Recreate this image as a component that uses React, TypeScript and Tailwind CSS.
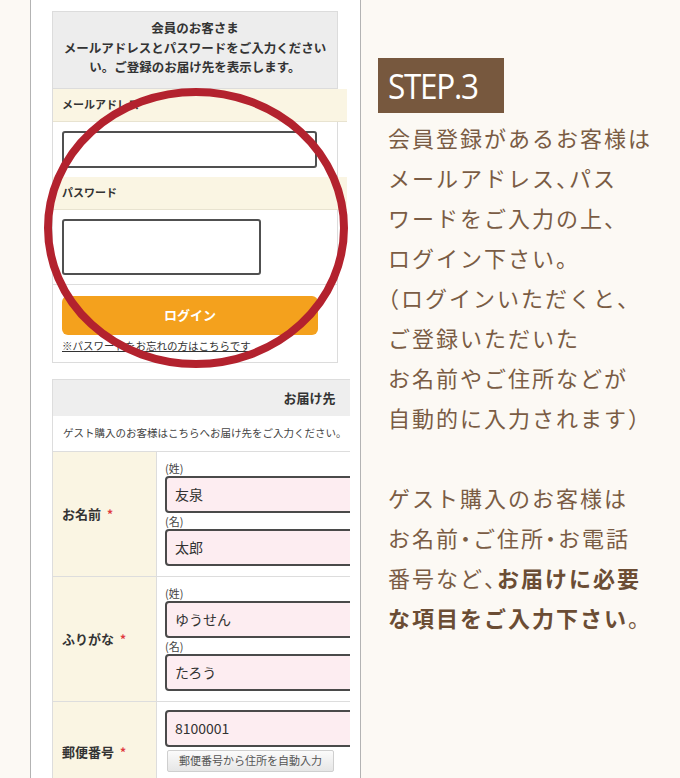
import React from 'react';

const jp = "font-['Noto_Sans_CJK_JP','Noto_Sans',sans-serif]";

const Half = ({ c }: { c: string }) => (
  <span className="[font-feature-settings:'halt']">{c}</span>
);

const Band = ({ label }: { label: string }) => (
  <div className="w-[294px] h-[33px] bg-[#faf5e3] border-b border-[#e8e3d0] flex items-center pl-[9px] text-[11px] font-semibold text-[#333]">
    {label}
  </div>
);

const Field = ({ value }: { value: string }) => (
  <div className="h-[37px] w-[300px] border-2 border-[#4a4a4a] rounded-[4px] bg-[#fdedf1] flex items-center pl-[8px] text-[14px] text-[#333]">
    {value}
  </div>
);

const Label = ({ text }: { text: string }) => (
  <div className="w-[104px] shrink-0 bg-[#faf5e3] border-r border-[#ddd] flex items-center pl-[9px] text-[13px] font-bold text-[#333]">
    {text}
    <span className="text-[#e0393e] ml-[6px] text-[12px]">*</span>
  </div>
);

const NameRow = ({ label, a, b }: { label: string; a: string; b: string }) => (
  <div className="flex border-b border-[#ddd]">
    <Label text={label} />
    <div className="pl-[8px] pt-[8px] pb-[10px]">
      <div className="text-[11px] leading-[16px] text-[#444]">(姓)</div>
      <Field value={a} />
      <div className="text-[11px] leading-[16px] text-[#444]">(名)</div>
      <Field value={b} />
    </div>
  </div>
);

export default function App() {
  return (
    <div className={`relative w-[680px] h-[778px] overflow-hidden bg-[#fcf9f4] flex ${jp}`}>
      <div className="w-[30px] shrink-0" />
      {/* screenshot panel */}
      <div className="w-[331px] h-full shrink-0 bg-white border-x border-[#b3b3b3] pl-[21px] pt-[11px]">
        <div className="w-[298px] overflow-hidden">
          {/* member login */}
          <div className="w-[286px] border border-[#dcdcdc]">
            <div className="bg-[#ededed] border-b border-[#dcdcdc] pt-[6px] pb-[11px] text-center text-[12.5px] leading-[19.5px] font-bold text-[#333]">
              会員のお客さま
              <br />
              メールアドレスとパスワードをご入力ください
              <br />
              い。ご登録のお届け先を表示します。
            </div>
            <Band label="メールアドレス" />
            <div className="px-[9px] py-[9px]">
              <div className="h-[37px] w-[255px] border-2 border-[#505050] rounded-[3px] bg-white" />
            </div>
            <Band label="パスワード" />
            <div className="px-[9px] pt-[9px] pb-[9px] border-b border-[#ddd]">
              <div className="h-[56px] w-[199px] border-2 border-[#505050] rounded-[3px] bg-white" />
            </div>
            <div className="px-[9px] pt-[11px] pb-[8px]">
              <div className="h-[39px] w-[256px] rounded-[6px] bg-[#f4a11d] flex items-center justify-center text-white text-[13px] font-bold">
                ログイン
              </div>
              <div className="mt-[3px] text-[10.5px] leading-[16px] text-[#333] underline">
                ※パスワードをお忘れの方はこちらです
              </div>
            </div>
          </div>

          {/* delivery */}
          <div className="mt-[16px] w-[514px] border-l border-t border-[#ddd]">
            <div className="h-[36px] bg-[#eeeeee] flex items-center justify-center text-[13px] font-bold text-[#333]">
              お届け先
            </div>
            <div className="h-[36px] border-b border-[#ddd] flex items-center pl-[10px] text-[10.5px] text-[#444]">
              ゲスト購入のお客様はこちらへお届け先をご入力ください。
            </div>
            <NameRow label="お名前" a="友泉" b="太郎" />
            <NameRow label="ふりがな" a="ゆうせん" b="たろう" />
            <div className="flex h-[100px]">
              <Label text="郵便番号" />
              <div className="pl-[8px] pt-[8px]">
                <Field value="8100001" />
                <div className="mt-[3px] ml-[2px] h-[22px] w-[167px] border border-[#cfcfcf] rounded-[2px] bg-gradient-to-b from-[#fbfbfb] to-[#e6e6e6] flex items-center justify-center text-[11px] text-[#555]">
                  郵便番号から住所を自動入力
                </div>
              </div>
            </div>
          </div>
        </div>
      </div>

      {/* explanation */}
      <div className="ml-[17px] pt-[58px]">
        <div className="w-[126px] h-[55px] bg-[#77583e] flex items-center pl-[10px]">
          <span className="font-['Open_Sans',sans-serif] font-normal text-[35px] leading-none text-white tracking-[-0.04em] origin-left scale-x-[0.9]">
            STEP.3
          </span>
        </div>
        <div className="mt-[4px] pl-[10px] text-[22px] leading-[40px] tracking-[2px] text-[#7a5c44] whitespace-nowrap">
          会員登録があるお客様は
          <br />
          メールアドレス<Half c="、" />パス
          <br />
          ワードをご入力の上<Half c="、" />
          <br />
          ログイン下さい。
          <br />
          <Half c="（" />ログインいただくと<Half c="、" />
          <br />
          ご登録いただいた
          <br />
          お名前やご住所などが
          <br />
          自動的に入力されます<Half c="）" />
          <br />
          <br />
          ゲスト購入のお客様は
          <br />
          お名前<Half c="・" />ご住所<Half c="・" />お電話
          <br />
          番号など<Half c="、" />
          <span className="font-bold text-[#6b4d34]">お届けに必要</span>
          <br />
          <span className="font-bold text-[#6b4d34]">な項目をご入力下さい</span>。
        </div>
      </div>

      {/* red highlight circle */}
      <svg className="absolute left-0 top-0 pointer-events-none" width="680" height="778" viewBox="0 0 680 778">
        <ellipse cx="196" cy="228" rx="148" ry="136" fill="none" stroke="#b3222e" strokeWidth="8" />
      </svg>
    </div>
  );
}
